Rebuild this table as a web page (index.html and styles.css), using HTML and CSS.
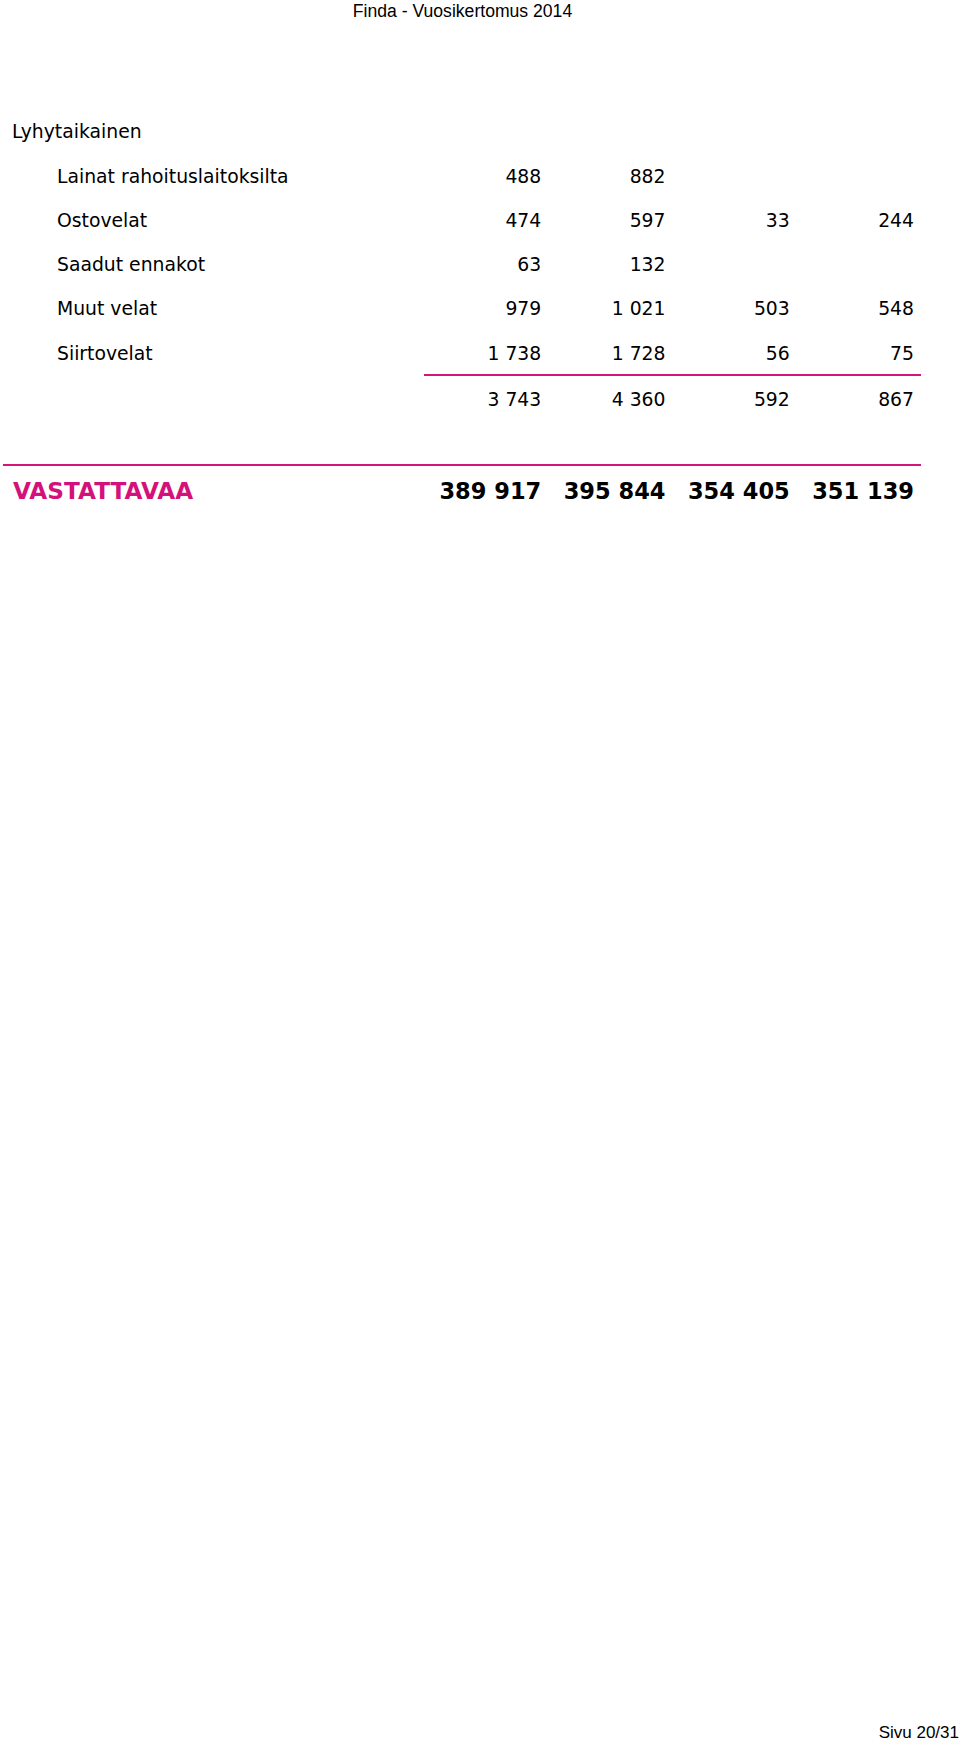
FILE: index.html
```html
<!DOCTYPE html>
<html lang="fi">
<head>
<meta charset="utf-8">
<title>Finda - Vuosikertomus 2014</title>
<link rel="stylesheet" href="styles.css">
</head>
<body>
<div class="page">
  <header class="doc-header">Finda - Vuosikertomus 2014</header>

  <section class="sheet">
    <div class="row heading">
      <div class="label">Lyhytaikainen</div>
      <div class="num"></div><div class="num"></div><div class="num"></div><div class="num"></div>
    </div>
    <div class="row item">
      <div class="label">Lainat rahoituslaitoksilta</div>
      <div class="num">488</div><div class="num">882</div><div class="num"></div><div class="num"></div>
    </div>
    <div class="row item">
      <div class="label">Ostovelat</div>
      <div class="num">474</div><div class="num">597</div><div class="num">33</div><div class="num">244</div>
    </div>
    <div class="row item">
      <div class="label">Saadut ennakot</div>
      <div class="num">63</div><div class="num">132</div><div class="num"></div><div class="num"></div>
    </div>
    <div class="row item">
      <div class="label">Muut velat</div>
      <div class="num">979</div><div class="num">1 021</div><div class="num">503</div><div class="num">548</div>
    </div>
    <div class="row item">
      <div class="label">Siirtovelat</div>
      <div class="num">1 738</div><div class="num">1 728</div><div class="num">56</div><div class="num">75</div>
    </div>
    <div class="row subtotal">
      <div class="label"></div>
      <div class="num">3 743</div><div class="num">4 360</div><div class="num">592</div><div class="num">867</div>
    </div>

    <div class="row total">
      <div class="label">VASTATTAVAA</div>
      <div class="num">389 917</div><div class="num">395 844</div><div class="num">354 405</div><div class="num">351 139</div>
    </div>
  </section>

  <footer class="doc-footer">Sivu 20/31</footer>
</div>
</body>
</html>
```

FILE: styles.css
```css
html, body {
  margin: 0;
  padding: 0;
  background: #ffffff;
  overflow: hidden;
}

.page {
  height: 1741px;
  display: flex;
  flex-direction: column;
  color: #000000;
  font-family: "DejaVu Sans", "Noto Sans", sans-serif;
}

.doc-header {
  width: 925px;
  padding-top: 1px;
  text-align: center;
  font-family: "Liberation Sans", Arial, sans-serif;
  font-size: 17.6px;
  line-height: 20px;
}

.sheet {
  width: 921px;
  margin-top: 87.5px;
  display: flex;
  flex-direction: column;
}

.row {
  display: grid;
  grid-template-columns: 424px repeat(4, 124.25px);
  font-size: 18.8px;
  line-height: 22px;
  padding: 12.75px 0 9.5px;
}

.num {
  text-align: right;
  padding-right: 7px;
  white-space: nowrap;
}

.heading .label {
  padding-left: 12px;
}

.item .label {
  padding-left: 57px;
}

.subtotal {
  background: linear-gradient(#d4147c, #d4147c) no-repeat;
  background-size: calc(100% - 424px) 2px;
  background-position: right top;
  padding-top: 14.5px;
}

.total {
  margin-top: 44px;
  margin-left: 3px;
  grid-template-columns: 421px repeat(4, 124.25px);
  border-top: 2px solid #d4147c;
  padding: 12px 0 0;
  font-size: 22.5px;
  line-height: 26px;
  font-weight: bold;
}

.total .label {
  padding-left: 10px;
  font-size: 23.2px;
  color: #d4107a;
}

.total .num {
  padding-right: 7px;
}

.doc-footer {
  margin-top: auto;
  margin-bottom: -1px;
  padding-right: 1px;
  text-align: right;
  font-family: "Liberation Sans", Arial, sans-serif;
  font-size: 17px;
  line-height: 18px;
}
```
